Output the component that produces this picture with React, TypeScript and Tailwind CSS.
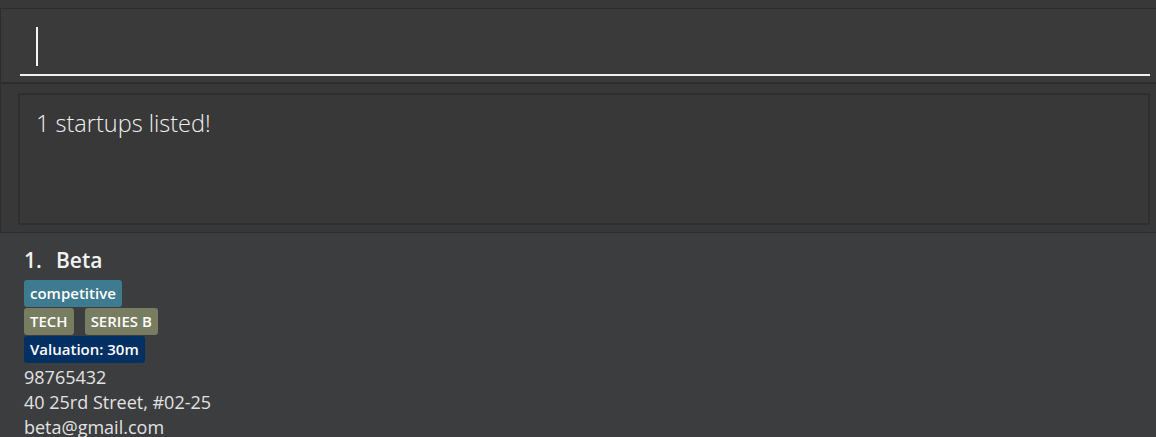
import React from "react";

export default function App() {
  const font = { fontFamily: '"Open Sans", "Noto Sans", sans-serif' };
  return (
    <div className="w-[1156px] h-[437px] overflow-hidden bg-[#383838] flex flex-col" style={font}>
      <div className="h-[8px] bg-[#383838] shrink-0" />
      {/* Command box */}
      <div className="h-[76px] shrink-0 border-t border-l border-b-2 border-[#2d2d2d] bg-[#3a3a3a] pl-[19px] pr-[6px] pt-[18px]">
        <div className="h-[49px] border-b-2 border-[#f0f0f0] pl-[16px]">
          <div className="w-[2px] h-[39px] bg-[#f5f5f5]" />
        </div>
      </div>
      {/* Result display */}
      <div className="h-[149px] shrink-0 border-l border-b border-[#2d2d2d] bg-[#383838] pl-[17px] pr-[6px] pt-[9px] pb-[7px]">
        <div className="h-full border-2 border-[#2f2f2f] bg-[#383838] pl-[16px] pt-[13px]">
          <div className="text-[23.5px] leading-[30px] font-light text-[#f0f0f0]">1 startups listed!</div>
        </div>
      </div>
      {/* List */}
      <div className="flex-1 bg-[#3c3d3f] pl-[24px] pt-[13px]">
        <div className="flex items-center text-[21px] leading-[29px] font-semibold text-[#f2f2f2]">
          <span className="w-[32px]">1.</span>
          <span>Beta</span>
        </div>
        <div className="flex flex-col gap-px mt-[5px] text-[15px] font-semibold text-white">
          <div className="flex">
            <span className="bg-[#3e7a90] rounded-[3px] px-[6px] h-[27px] leading-[27px]">competitive</span>
          </div>
          <div className="flex gap-[11px]">
            <span className="bg-[#787c60] rounded-[3px] px-[6px] h-[27px] leading-[27px]">TECH</span>
            <span className="bg-[#787c60] rounded-[3px] px-[6px] h-[27px] leading-[27px]">SERIES B</span>
          </div>
          <div className="flex">
            <span className="bg-[#023062] rounded-[3px] px-[6px] h-[27px] leading-[27px]">Valuation: 30m</span>
          </div>
        </div>
        <div className="text-[18px] leading-[25px] text-[#e2e2e2] mt-[2px]">
          <div>98765432</div>
          <div>40 25rd Street, #02-25</div>
          <div>beta@gmail.com</div>
        </div>
      </div>
    </div>
  );
}
